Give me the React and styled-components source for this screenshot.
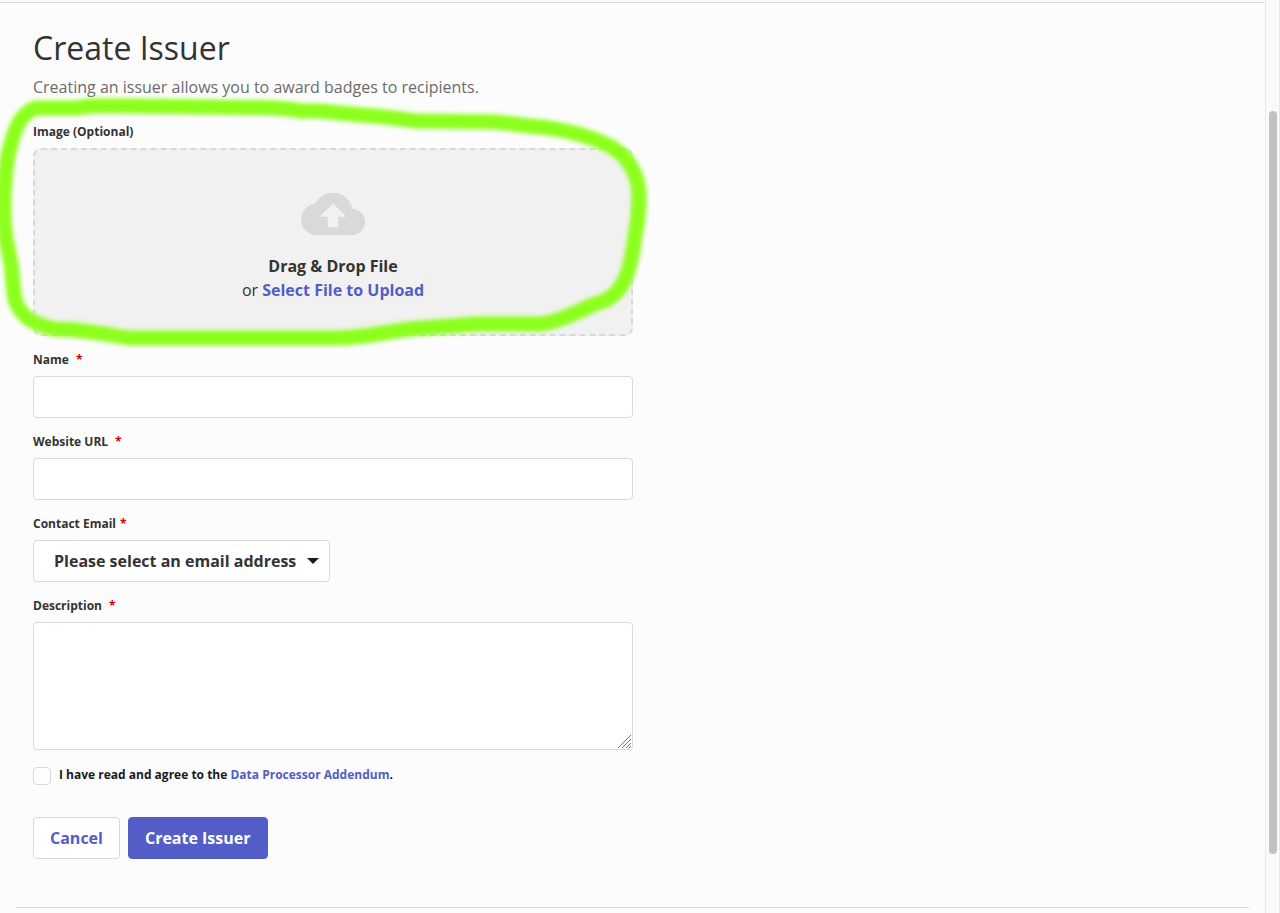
import React from "react";
import styled, { createGlobalStyle } from "styled-components";

const GlobalStyle = createGlobalStyle`
  *, *::before, *::after { box-sizing: border-box; }
  body {
    margin: 0;
    background: #fcfcfc;
    color: #333;
    font: 400 16px/24px "Open Sans", "Noto Sans", sans-serif;
  }
  button, input, select, textarea { font: inherit; color: inherit; }
`;

const Shell = styled.div`
  display: flex;
  min-height: 100vh;
`;

const Page = styled.main`
  flex: 1;
  min-width: 0;
  margin-top: 2px;
  border-top: 1px solid #d9d9d9;
`;

const Content = styled.div`
  max-width: 665px;
  padding: 24px 32px 48px 33px;
`;

const Title = styled.h1`
  margin: 0;
  font-size: 32px;
  font-weight: 400;
  line-height: 42px;
`;

const Intro = styled.p`
  margin: 6px 0 24px;
  color: #6b6b6b;
`;

const Form = styled.form`
  display: flex;
  flex-direction: column;
  gap: 15px;
`;

const Field = styled.div`
  position: relative;
  display: flex;
  flex-direction: column;
  align-items: ${(p) => (p.$fit ? "flex-start" : "stretch")};
  gap: 7px;
`;

const Label = styled.label`
  font-size: 12px;
  font-weight: 700;
  line-height: 18px;
`;

const Star = styled.span`
  margin-left: ${(p) => (p.$near ? 4 : 7)}px;
  color: #d30000;
`;

const DropZone = styled.div`
  display: flex;
  flex-direction: column;
  align-items: center;
  padding: 32px 16px;
  border: 2px dashed #d9d9d9;
  border-radius: 8px;
  background: #f1f1f1;
`;

const CloudIcon = styled.svg`
  width: 64px;
  height: 64px;
  margin-bottom: 8px;
  fill: #d9d9d9;
`;

const DropText = styled.p`
  margin: 0;
  font-weight: ${(p) => (p.$strong ? 700 : 400)};
`;

const FileInput = styled.input`
  position: absolute;
  width: 1px;
  height: 1px;
  opacity: 0;
`;

const FileLink = styled.label`
  color: #525dc7;
  font-weight: 700;
  cursor: pointer;
`;

const Marker = styled.svg`
  position: absolute;
  top: -32px;
  left: -33px;
  width: 665px;
  height: 265px;
  overflow: visible;
  pointer-events: none;
  fill: none;
  stroke: #8cff1a;
  stroke-width: 15px;
  stroke-linejoin: round;
`;

const TextInput = styled.input`
  width: 100%;
  height: 42px;
  padding: 8px 12px;
  border: 1px solid #d9d9d9;
  border-radius: 4px;
  background: #fff;
`;

const AreaWrap = styled.div`
  position: relative;
  display: flex;
`;

const TextArea = styled.textarea`
  width: 100%;
  height: 128px;
  padding: 8px 12px;
  border: 1px solid #d9d9d9;
  border-radius: 4px;
  background: #fff;
  resize: vertical;
  &::-webkit-resizer { background: transparent; }
`;

const Grip = styled.svg`
  position: absolute;
  right: 2px;
  bottom: 2px;
  width: 13px;
  height: 13px;
  pointer-events: none;
  stroke: #707070;
`;

const SelectWrap = styled.div`
  position: relative;
  display: flex;
`;

const Select = styled.select`
  height: 42px;
  padding: 0 32px 0 20px;
  border: 1px solid #d9d9d9;
  border-radius: 4px;
  background: #fff;
  font-weight: 700;
  appearance: none;
`;

const Caret = styled.svg`
  position: absolute;
  top: 18px;
  right: 11px;
  width: 12px;
  height: 6px;
  pointer-events: none;
  fill: #1a1a1a;
`;

const Agreement = styled.div`
  display: flex;
  gap: 8px;
  margin-top: 2px;
  color: #1a1a1a;
`;

const Checkbox = styled.input`
  appearance: none;
  width: 18px;
  height: 18px;
  margin: 0;
  border: 1px solid #d9d9d9;
  border-radius: 4px;
  background: #fff;
  &:checked { background: #525dc7; }
`;

const AgreementLabel = styled(Label)`
  line-height: 16px;
`;

const Link = styled.a`
  color: #525dc7;
  text-decoration: none;
`;

const Actions = styled.div`
  display: flex;
  gap: 8px;
  margin-top: 17px;
`;

const Button = styled.button`
  height: 42px;
  padding: 0 16px;
  border: 1px solid ${(p) => (p.$primary ? "#525dc7" : "#d9d9d9")};
  border-radius: 4px;
  background: ${(p) => (p.$primary ? "#525dc7" : "#fff")};
  color: ${(p) => (p.$primary ? "#fff" : "#525dc7")};
  font-weight: 700;
`;

const Divider = styled.hr`
  margin: 0 16px;
  border: 0;
  border-top: 1px solid #d9d9d9;
`;

const ScrollTrack = styled.div`
  position: sticky;
  top: 0;
  display: grid;
  grid-template-rows: 111fr 743fr 59fr;
  width: 15px;
  height: 100vh;
  padding: 0 2px 0 3px;
  border: solid #e8e8e8;
  border-width: 0 1px;
  background: #fafafa;
`;

const ScrollThumb = styled.div`
  grid-row: 2;
  width: 8px;
  border-radius: 4px;
  background: #c1c1c1;
`;

function MarkerOutline() {
  return (
    <Marker viewBox="0 90 665 265" aria-hidden="true">
      <defs>
        <filter id="soft-edge" x="-5%" y="-10%" width="110%" height="120%">
          <feGaussianBlur stdDeviation="2.3" />
        </filter>
      </defs>
      <path
        filter="url(#soft-edge)"
        d="M36 107 L78 107 Q86 105 94 105 L128 105 L275 107 Q290 108 302 110 L320 110 L350 113 L385 116 L416 120 L496 121 L530 125 Q562 127 594 138 Q616 146 626 158 Q638 174 639 190 Q640 210 635 235 Q632 262 625 278 Q618 294 604 300 L590 305 Q556 322 540 323 L477 323 L410 328 L384 332 Q355 337 335 337 L130 337 Q115 335 105 333 L75 329 L55 328 Q35 324 25 315 Q14 303 14 292 L11 262 L6 238 Q3 218 4 195 Q5 170 9 150 L14 133 Q21 112 36 107 Z"
      />
    </Marker>
  );
}

export default function App() {
  return (
    <>
      <GlobalStyle />
      <Shell>
        <Page>
          <Content>
            <Title>Create Issuer</Title>
            <Intro>Creating an issuer allows you to award badges to recipients.</Intro>
            <Form onSubmit={(e) => e.preventDefault()}>
              <Field>
                <Label htmlFor="image">Image (Optional)</Label>
                <DropZone>
                  <CloudIcon viewBox="0 0 24 24" aria-hidden="true">
                    <path d="M19.35 10.04C18.67 6.59 15.64 4 12 4 9.11 4 6.6 5.64 5.35 8.04 2.34 8.36 0 10.91 0 14c0 3.31 2.69 6 6 6h13c2.76 0 5-2.24 5-5 0-2.64-2.05-4.78-4.65-4.96zM14 13v4h-4v-4H7l5-5 5 5h-3z" />
                  </CloudIcon>
                  <DropText $strong>Drag &amp; Drop File</DropText>
                  <DropText>
                    or <FileLink htmlFor="image">Select File to Upload</FileLink>
                  </DropText>
                  <FileInput id="image" type="file" accept="image/*" />
                </DropZone>
                <MarkerOutline />
              </Field>
              <Field>
                <Label htmlFor="name">Name<Star>*</Star></Label>
                <TextInput id="name" type="text" />
              </Field>
              <Field>
                <Label htmlFor="website">Website URL<Star>*</Star></Label>
                <TextInput id="website" type="url" />
              </Field>
              <Field $fit>
                <Label htmlFor="email">Contact Email<Star $near>*</Star></Label>
                <SelectWrap>
                  <Select id="email" defaultValue="">
                    <option value="">Please select an email address</option>
                  </Select>
                  <Caret viewBox="0 0 12 6" aria-hidden="true">
                    <path d="M0 0h12L6 6z" />
                  </Caret>
                </SelectWrap>
              </Field>
              <Field>
                <Label htmlFor="description">Description<Star>*</Star></Label>
                <AreaWrap>
                  <TextArea id="description" />
                  <Grip viewBox="0 0 13 13" aria-hidden="true">
                    <path d="M0 13L13 0M4 13l9-9M8 13l5-5M11 13l2-2" />
                  </Grip>
                </AreaWrap>
              </Field>
              <Agreement>
                <Checkbox id="agree" type="checkbox" />
                <AgreementLabel htmlFor="agree">
                  I have read and agree to the <Link href="#addendum">Data Processor Addendum</Link>.
                </AgreementLabel>
              </Agreement>
              <Actions>
                <Button type="button">Cancel</Button>
                <Button type="submit" $primary>Create Issuer</Button>
              </Actions>
            </Form>
          </Content>
          <Divider />
        </Page>
        <ScrollTrack aria-hidden="true">
          <ScrollThumb />
        </ScrollTrack>
      </Shell>
    </>
  );
}
